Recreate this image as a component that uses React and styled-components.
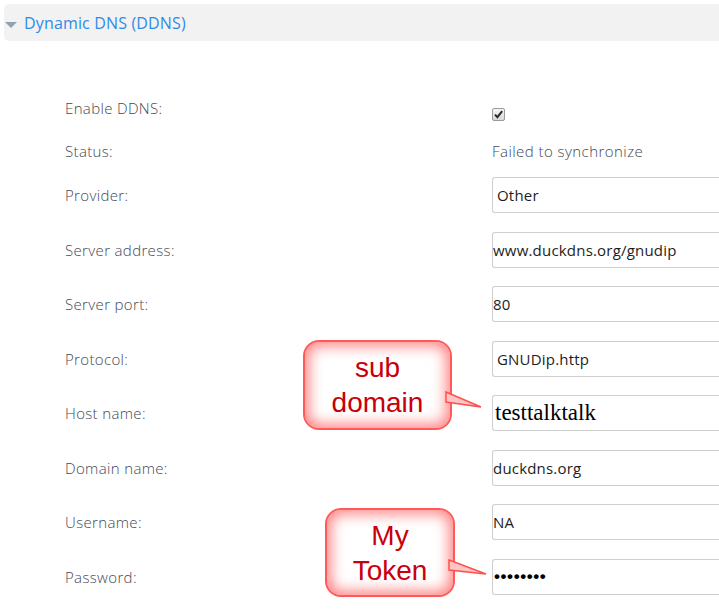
import React from 'react';
import styled, { createGlobalStyle } from 'styled-components';

const GlobalStyle = createGlobalStyle`
  html, body {
    margin: 0;
    padding: 0;
    background: #fff;
    overflow: hidden;
  }
  body {
    font-family: "Open Sans", "Liberation Sans", sans-serif;
  }
`;

const Page = styled.div`
  position: relative;
  width: 719px;
  height: 613px;
  overflow: hidden;
`;

const SectionHeader = styled.div`
  display: flex;
  align-items: center;
  gap: 7px;
  margin: 4px 0 0 4px;
  height: 37px;
  padding-left: 1px;
  background: #f2f2f2;
  border-radius: 5px 0 0 5px;
`;

const Caret = styled.span`
  width: 0;
  height: 0;
  margin-top: 5px;
  border-left: 6px solid transparent;
  border-right: 6px solid transparent;
  border-top: 6px solid #8fa2b0;
`;

const SectionTitle = styled.span`
  font-size: 16px;
  color: #2f8be8;
  letter-spacing: 0.15px;
`;

const Form = styled.div`
  display: flex;
  flex-direction: column;
  padding: 56px 0 0 65px;
`;

const Row = styled.div`
  display: grid;
  grid-template-columns: 427px 1fr;
  align-items: ${p => (p.$top ? 'start' : 'center')};
  height: ${p => p.$h}px;
  margin-top: ${p => p.$space || 0}px;
`;

const Label = styled.span`
  font-size: 15px;
  font-weight: 300;
  letter-spacing: 0.35px;
  line-height: 22px;
  color: #3f4853;
`;

const StatusText = styled(Label)`
  letter-spacing: 0.45px;
`;

const CheckBox = styled.span`
  display: block;
  box-sizing: border-box;
  width: 13px;
  height: 13px;
  margin-top: 11px;
  border: 1px solid #9a9a9a;
  border-radius: 2px;
  background: linear-gradient(#f6f6f6, #d8d8d8);
  svg { display: block; }
`;

const Field = styled.div`
  box-sizing: border-box;
  width: 260px;
  height: 36px;
  display: flex;
  align-items: center;
  padding-left: ${p => p.$pad}px;
  border: 1px solid #cfcfcf;
  border-right: none;
  border-radius: 3px 0 0 3px;
  background: #fff;
  font-size: 15px;
  letter-spacing: 0.2px;
  color: #1d1d1d;
  white-space: nowrap;
`;

const SerifValue = styled.span`
  font-family: "Liberation Serif", "Times New Roman", serif;
  font-size: 23px;
  letter-spacing: 0;
  color: #000;
`;

const Dots = styled.span`
  font-family: "Liberation Sans", Arial, sans-serif;
  font-size: 17px;
  font-weight: bold;
  letter-spacing: 0.6px;
  color: #000;
`;

const Callout = styled.div`
  position: absolute;
  left: ${p => p.$x}px;
  top: ${p => p.$y}px;
  width: ${p => p.$w}px;
  height: ${p => p.$h}px;
  box-sizing: border-box;
  display: flex;
  flex-direction: column;
  align-items: center;
  justify-content: center;
  border: 2px solid #ff5a5a;
  border-radius: 16px;
  background: #fff;
  box-shadow: inset 0 0 14px 4px rgba(255, 100, 100, 0.8);
  font-family: "Liberation Sans", Arial, sans-serif;
  font-size: 28px;
  line-height: 35px;
  color: #c8000a;
`;

const Tail = styled.svg`
  position: absolute;
  left: calc(100% - 4px);
  top: 0;
  overflow: visible;
`;

const rows = [
  { label: 'Provider:', value: 'Other', pad: 4 },
  { label: 'Server address:', value: 'www.duckdns.org/gnudip', pad: 0 },
  { label: 'Server port:', value: '80', pad: 0 },
  { label: 'Protocol:', value: 'GNUDip.http', pad: 4 },
  { label: 'Host name:', value: <SerifValue>testtalktalk</SerifValue>, pad: 2 },
  { label: 'Domain name:', value: 'duckdns.org', pad: 0 },
  { label: 'Username:', value: 'NA', pad: 0 },
  { label: 'Password:', value: <Dots>••••••••</Dots>, pad: 1 },
];

const Bubble = ({ x, y, w, h, base, tip, lines }) => (
  <Callout $x={x} $y={y} $w={w} $h={h}>
    {lines.map(l => (
      <span key={l}>{l}</span>
    ))}
    <Tail width="1" height="1">
      <polygon
        points={`0,${base[0]} ${tip[0] + 4},${tip[1]} 0,${base[1]}`}
        fill="#ffc4c4"
        stroke="#ff5050"
        strokeWidth="1.5"
        strokeLinejoin="miter"
      />
    </Tail>
  </Callout>
);

export default function App() {
  return (
    <Page>
      <GlobalStyle />
      <SectionHeader>
        <Caret />
        <SectionTitle>Dynamic DNS (DDNS)</SectionTitle>
      </SectionHeader>

      <Form>
        <Row $h={22} $top>
          <Label>Enable DDNS:</Label>
          <CheckBox>
            <svg width="11" height="11" viewBox="0 0 11 11">
              <path d="M2 5.6 L4.4 8.2 L9.2 2.2" fill="none" stroke="#2b2b2b" strokeWidth="2" />
            </svg>
          </CheckBox>
        </Row>
        <Row $h={22} $space={21}>
          <Label>Status:</Label>
          <StatusText>Failed to synchronize</StatusText>
        </Row>
        {rows.map((r, i) => (
          <Row key={r.label} $h={36} $space={i === 0 ? 15 : 18.5}>
            <Label>{r.label}</Label>
            <Field $pad={r.pad}>{r.value}</Field>
          </Row>
        ))}
      </Form>

      <Bubble x={303} y={340} w={149} h={90} base={[50, 60]} tip={[31, 65]} lines={['sub', 'domain']} />
      <Bubble x={325} y={508} w={130} h={89} base={[50, 60]} tip={[33, 64]} lines={['My', 'Token']} />
    </Page>
  );
}
